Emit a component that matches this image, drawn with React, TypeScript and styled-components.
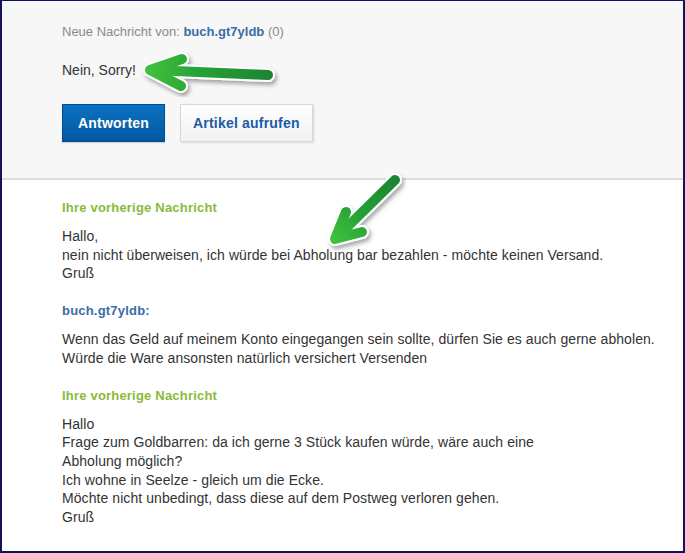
import styled, { createGlobalStyle } from "styled-components";

const GlobalStyle = createGlobalStyle`
  html, body {
    margin: 0;
    padding: 0;
    background: #ffffff;
  }
  body {
    font-family: "Liberation Sans", Arial, sans-serif;
  }
`;

const Frame = styled.div`
  position: relative;
  width: 685px;
  height: 553px;
  box-sizing: border-box;
  border: 2px solid #12125f;
  border-top-width: 1px;
  background: #ffffff;
  overflow: hidden;
`;

const TopPanel = styled.section`
  background: #f7f7f7;
  padding: 23px 60px 36px;
  border-bottom: 2px solid #dcdcdc;
`;

const MetaLine = styled.div`
  font-size: 13px;
  line-height: 16px;
  color: #8a8a8a;
`;

const Sender = styled.span`
  font-weight: 700;
  color: #3b6ca6;
`;

const ReplyText = styled.p`
  margin: 21px 0 0;
  font-size: 14px;
  line-height: 18px;
  color: #333333;
`;

const ButtonRow = styled.div`
  display: flex;
  gap: 15px;
  margin-top: 25px;
`;

const Button = styled.button<{ $primary?: boolean }>`
  height: 38px;
  box-sizing: border-box;
  padding: 0 ${(p) => (p.$primary ? "15px" : "12px")};
  font-family: "Liberation Sans", Arial, sans-serif;
  font-size: 14px;
  font-weight: 700;
  letter-spacing: 0.2px;
  cursor: pointer;
  border: 1px solid ${(p) => (p.$primary ? "#034b8e" : "#d7d7d7")};
  color: ${(p) => (p.$primary ? "#ffffff" : "#1a5ca8")};
  background: ${(p) =>
    p.$primary
      ? "linear-gradient(#0c72c2, #0058a3)"
      : "linear-gradient(#ffffff, #f1f1f1)"};
  box-shadow: ${(p) =>
    p.$primary ? "0 1px 1px rgba(0,0,0,0.15)" : "1px 1px 2px rgba(0,0,0,0.12)"};
`;

const History = styled.section`
  padding: 20px 0 0 60px;
  display: flex;
  flex-direction: column;
  gap: 20px;
`;

const Message = styled.div``;

const MessageTitle = styled.h4<{ $mine?: boolean }>`
  margin: 0 0 11px;
  font-size: 13px;
  line-height: 16px;
  font-weight: 700;
  letter-spacing: 0.2px;
  color: ${(p) => (p.$mine ? "#8bba3b" : "#3b6ca6")};
`;

const MessageBody = styled.p`
  margin: 0;
  font-size: 14px;
  line-height: 18.7px;
  letter-spacing: 0.07px;
  white-space: nowrap;
  color: #333333;
`;

const Overlay = styled.svg`
  position: absolute;
  left: -2px;
  top: -1px;
  width: 685px;
  height: 553px;
  pointer-events: none;
`;

interface ArrowProps {
  id: string;
  shaft: string;
  head: string;
  from: [number, number];
  to: [number, number];
}

const Arrow = ({ id, shaft, head, from, to }: ArrowProps) => (
  <g filter="url(#arrowShadow)">
    <defs>
      <linearGradient
        id={id}
        gradientUnits="userSpaceOnUse"
        x1={from[0]}
        y1={from[1]}
        x2={to[0]}
        y2={to[1]}
      >
        <stop offset="0" stopColor="#1b8530" />
        <stop offset="0.6" stopColor="#26a236" />
        <stop offset="1" stopColor="#3fc03c" />
      </linearGradient>
    </defs>
    <g fill="none" strokeLinecap="round" strokeLinejoin="round">
      <path d={shaft} stroke="#ffffff" strokeWidth={14} />
      <path d={head} stroke="#ffffff" strokeWidth={14} />
      <path d={shaft} stroke={`url(#${id})`} strokeWidth={10} />
      <path d={head} stroke={`url(#${id})`} strokeWidth={10} />
    </g>
  </g>
);

const messages = [
  {
    mine: true,
    title: "Ihre vorherige Nachricht",
    lines: [
      "Hallo,",
      "nein nicht überweisen, ich würde bei Abholung bar bezahlen - möchte keinen Versand.",
      "Gruß",
    ],
  },
  {
    mine: false,
    title: "buch.gt7yldb:",
    lines: [
      "Wenn das Geld auf meinem Konto eingegangen sein sollte, dürfen Sie es auch gerne abholen.",
      "Würde die Ware ansonsten natürlich versichert Versenden",
    ],
  },
  {
    mine: true,
    title: "Ihre vorherige Nachricht",
    lines: [
      "Hallo",
      "Frage zum Goldbarren: da ich gerne 3 Stück kaufen würde, wäre auch eine",
      "Abholung möglich?",
      "Ich wohne in Seelze - gleich um die Ecke.",
      "Möchte nicht unbedingt, dass diese auf dem Postweg verloren gehen.",
      "Gruß",
    ],
  },
];

export default function App() {
  return (
    <>
      <GlobalStyle />
      <Frame>
        <TopPanel>
          <MetaLine>
            Neue Nachricht von: <Sender>buch.gt7yldb</Sender> (0)
          </MetaLine>
          <ReplyText>Nein, Sorry!</ReplyText>
          <ButtonRow>
            <Button $primary>Antworten</Button>
            <Button>Artikel aufrufen</Button>
          </ButtonRow>
        </TopPanel>
        <History>
          {messages.map((m, i) => (
            <Message key={i}>
              <MessageTitle $mine={m.mine}>{m.title}</MessageTitle>
              <MessageBody>
                {m.lines.map((l, j) => (
                  <span key={j}>
                    {l}
                    {j < m.lines.length - 1 && <br />}
                  </span>
                ))}
              </MessageBody>
            </Message>
          ))}
        </History>
        <Overlay viewBox="0 0 685 553">
          <defs>
            <filter id="arrowShadow" x="-20%" y="-40%" width="140%" height="180%">
              <feDropShadow dx="2" dy="3" stdDeviation="2" floodColor="#000" floodOpacity="0.35" />
            </filter>
          </defs>
          <Arrow
            id="g1"
            shaft="M268 75 L152 70"
            head="M182 59 L150 70 L181 86"
            from={[270, 75]}
            to={[150, 70]}
          />
          <Arrow
            id="g2"
            shaft="M395 180 L338 236"
            head="M346 212 L335 239 L362 232"
            from={[395, 180]}
            to={[335, 239]}
          />
        </Overlay>
      </Frame>
    </>
  );
}
